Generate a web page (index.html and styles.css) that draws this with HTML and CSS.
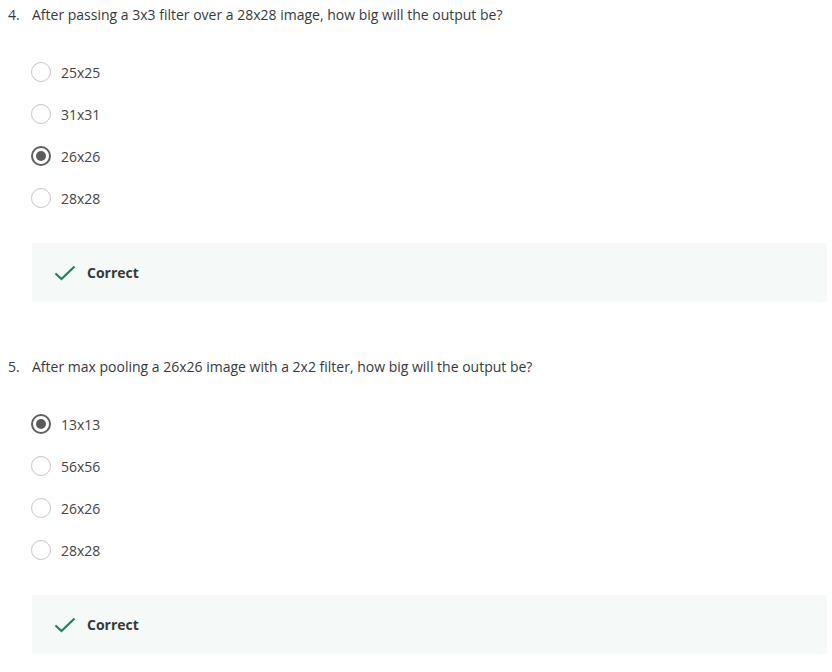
FILE: index.html
```html
<!DOCTYPE html>
<html>
<head>
<meta charset="utf-8">
<link rel="stylesheet" href="styles.css">
</head>
<body>
<div class="quiz">
  <section class="question">
    <div class="prompt"><span class="num">4.</span><span class="text">After passing a 3x3 filter over a 28x28 image, how big will the output be?</span></div>
    <ul class="options">
      <li class="option"><span class="radio"></span><span class="label">25x25</span></li>
      <li class="option"><span class="radio"></span><span class="label">31x31</span></li>
      <li class="option"><span class="radio checked"></span><span class="label">26x26</span></li>
      <li class="option"><span class="radio"></span><span class="label">28x28</span></li>
    </ul>
    <div class="feedback">
      <svg class="check" width="22" height="16" viewBox="0 0 22 16"><path d="M1.5 8.5 L7.5 14 L20.5 1.5" fill="none" stroke="#1f8354" stroke-width="2.2"/></svg>
      <span class="fb-text">Correct</span>
    </div>
  </section>
  <section class="question">
    <div class="prompt"><span class="num">5.</span><span class="text">After max pooling a 26x26 image with a 2x2 filter, how big will the output be?</span></div>
    <ul class="options">
      <li class="option"><span class="radio checked"></span><span class="label">13x13</span></li>
      <li class="option"><span class="radio"></span><span class="label">56x56</span></li>
      <li class="option"><span class="radio"></span><span class="label">26x26</span></li>
      <li class="option"><span class="radio"></span><span class="label">28x28</span></li>
    </ul>
    <div class="feedback">
      <svg class="check" width="22" height="16" viewBox="0 0 22 16"><path d="M1.5 8.5 L7.5 14 L20.5 1.5" fill="none" stroke="#1f8354" stroke-width="2.2"/></svg>
      <span class="fb-text">Correct</span>
    </div>
  </section>
</div>
</body>
</html>
```
FILE: styles.css
```css
html, body {
  margin: 0;
  padding: 0;
  background: #ffffff;
}
body {
  font-family: "Open Sans", "DejaVu Sans", sans-serif;
  font-size: 14px;
  color: #373a3c;
}
.quiz {
  padding: 5px 5px 0 8px;
}
.question {
  margin-bottom: 55px;
}
.question:last-child {
  margin-bottom: 0;
}
.prompt {
  display: flex;
  line-height: 20px;
}
.num {
  width: 24px;
  flex: none;
}
.options {
  list-style: none;
  margin: 0;
  padding: 37px 0 0 23px;
  display: flex;
  flex-direction: column;
  gap: 22px;
}
.option {
  display: flex;
  align-items: center;
  height: 20px;
}
.radio {
  width: 20px;
  height: 20px;
  border: 1.5px solid #c6c6c6;
  border-radius: 50%;
  box-sizing: border-box;
  margin-right: 10px;
  position: relative;
  flex: none;
}
.radio.checked {
  border: 2.5px solid #606060;
}
.radio.checked::after {
  content: "";
  position: absolute;
  left: 2.5px;
  top: 2.5px;
  width: 10px;
  height: 10px;
  border-radius: 50%;
  background: #5c5c5c;
}
.label {
  color: #444;
}
.feedback {
  margin: 35px 0 0 24px;
  height: 59px;
  background: #f5f9f8;
  display: flex;
  align-items: center;
  padding-left: 22px;
}
.check {
  margin-right: 11px;
  flex: none;
}
.fb-text {
  font-weight: 700;
  color: #373a3c;
}
```
